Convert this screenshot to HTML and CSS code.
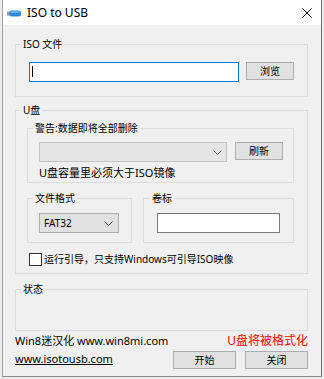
FILE: index.html
```html
<!DOCTYPE html>
<html lang="zh-CN">
<head>
<meta charset="utf-8">
<title>ISO to USB</title>
<link rel="stylesheet" href="styles.css">
</head>
<body>
<div class="window">
  <div class="titlebar">
    <svg class="app-icon" width="14" height="7" viewBox="0 0 14 7">
      <rect x="0" y="1.5" width="2" height="4" fill="#9aa4ad"/>
      <rect x="2" y="0.5" width="12" height="6" rx="2.5" fill="#2d8ad8"/>
      <rect x="3.5" y="1.2" width="9" height="1.8" rx="0.9" fill="#6cb6f0"/>
    </svg>
    <span class="title">ISO to USB</span>
    <svg class="close" width="10" height="10" viewBox="0 0 10 10">
      <path d="M0.5 0.5 L9.5 9.5 M9.5 0.5 L0.5 9.5" stroke="#000" stroke-width="1" fill="none"/>
    </svg>
  </div>
  <div class="client">
    <div class="group g-iso">
      <div class="legend">ISO 文件</div>
      <div class="row iso-row">
        <div class="textbox focused"><span class="caret"></span></div>
        <div class="button btn-browse">浏览</div>
      </div>
    </div>

    <div class="group g-usb">
      <div class="legend">U盘</div>
      <div class="group g-warn">
        <div class="legend">警告:数据即将全部删除</div>
        <div class="row warn-row">
          <div class="combo combo-disabled">
            <svg class="chev" width="9" height="5" viewBox="0 0 9 5"><path d="M0.5 0.5 L4.5 4.5 L8.5 0.5" stroke="#606060" fill="none"/></svg>
          </div>
          <div class="button btn-refresh">刷新</div>
        </div>
        <div class="capacity">U盘容量里必须大于ISO镜像</div>
      </div>
      <div class="row sub-row">
        <div class="group g-fs">
          <div class="legend">文件格式</div>
          <div class="combo fs-combo">
            <span class="combo-text">FAT32</span>
            <svg class="chev" width="9" height="5" viewBox="0 0 9 5"><path d="M0.5 0.5 L4.5 4.5 L8.5 0.5" stroke="#404040" fill="none"/></svg>
          </div>
        </div>
        <div class="group g-label">
          <div class="legend">卷标</div>
          <div class="textbox label-box"></div>
        </div>
      </div>
      <div class="check-row">
        <span class="checkbox"></span>
        <span class="check-text">运行引导，只支持Windows可引导ISO映像</span>
      </div>
    </div>

    <div class="group g-status">
      <div class="legend">状态</div>
    </div>

    <div class="footer-row first">
      <span class="credit">Win8迷汉化 www.win8mi.com</span>
      <span class="warning">U盘将被格式化</span>
    </div>
    <div class="footer-row second">
      <a class="site">www.isotousb.com</a>
      <div class="buttons">
        <div class="button btn-action">开始</div>
        <div class="button btn-action">关闭</div>
      </div>
    </div>
  </div>
</div>
</body>
</html>
```

FILE: styles.css
```css
html, body {
  margin: 0;
  padding: 0;
}
body {
  width: 324px;
  height: 379px;
  overflow: hidden;
  background: #ededed;
  font-family: "Noto Sans", "Noto Sans CJK SC", sans-serif;
  color: #000;
}
.window {
  margin-left: 2px;
  width: 318px;
  height: 376px;
  border: 1px solid;
  border-top: 0;
  border-color: #a0a0a0 #707070 #8a8a8a #a0a0a0;
  background: #f0f0f0;
}
.titlebar {
  height: 25px;
  background: #fff;
  display: flex;
  align-items: center;
  padding: 0 9px 0 4px;
}
.app-icon {
  display: block;
  margin-top: 1px;
}
.title {
  margin-left: 6px;
  font-size: 12px;
  line-height: 16px;
}
.close {
  display: block;
  margin-left: auto;
  margin-top: 1px;
}
.client {
  padding: 19px 13px 0 12px;
}
.group {
  --pl: 0px;
  border: 1px solid #dcdcdc;
  padding-left: var(--pl);
}
.legend {
  width: max-content;
  margin: -7px 0 0 calc(5px - var(--pl));
  padding: 0 2px;
  background: #f0f0f0;
  font-size: 10px;
  line-height: 13px;
}
.row {
  display: flex;
  align-items: flex-start;
}
.textbox {
  box-sizing: border-box;
  height: 20px;
  background: #fff;
  border: 1px solid #7a7a7a;
}
.button {
  box-sizing: border-box;
  height: 18px;
  background: #e1e1e1;
  border: 1px solid #adadad;
  font-size: 10px;
  line-height: 16px;
  text-align: center;
}

/* ISO group */
.g-iso {
  --pl: 13px;
  padding-right: 13px;
  padding-bottom: 14px;
}
.iso-row {
  margin-top: 11px;
  gap: 7px;
}
.textbox.focused {
  width: 210px;
  border-color: #0078d7;
}
.caret {
  display: block;
  width: 1px;
  height: 11px;
  margin: 3px 0 0 2px;
  background: #000;
}
.btn-browse {
  width: 48px;
}

/* USB group */
.g-usb {
  --pl: 11px;
  margin-top: 13px;
  padding-right: 13px;
  padding-bottom: 7px;
}
.g-warn {
  --pl: 11px;
  margin-top: 11px;
  padding-right: 10px;
  padding-bottom: 1px;
}
.warn-row {
  margin-top: 7px;
  gap: 8px;
}
.combo {
  box-sizing: border-box;
  height: 20px;
  display: flex;
  align-items: center;
  border: 1px solid #adadad;
  background: #e1e1e1;
}
.combo-disabled {
  width: 188px;
  background: #e5e5e5;
  border-color: #c4c4c4;
  justify-content: flex-end;
  padding-right: 4px;
}
.chev {
  display: block;
}
.btn-refresh {
  width: 48px;
}
.capacity {
  margin-top: 3px;
  font-size: 11px;
  line-height: 16px;
}
.sub-row {
  margin-top: 15px;
  gap: 11px;
}
.g-fs {
  --pl: 11px;
  width: 105px;
  box-sizing: border-box;
  padding-bottom: 9px;
}
.fs-combo {
  margin-top: 8px;
  width: 80px;
  padding: 0 5px 0 4px;
  justify-content: space-between;
}
.combo-text {
  font-size: 10px;
  line-height: 14px;
}
.g-label {
  --pl: 13px;
  width: 151px;
  box-sizing: border-box;
  padding-bottom: 9px;
}
.g-label .legend {
  margin-left: calc(6px - var(--pl));
}
.label-box {
  margin-top: 8px;
  width: 123px;
}
.check-row {
  margin: 10px 0 0 2px;
  display: flex;
  align-items: center;
  gap: 2px;
  height: 13px;
}
.checkbox {
  box-sizing: border-box;
  width: 13px;
  height: 13px;
  border: 1px solid #333;
  background: #fff;
}
.check-text {
  font-size: 10px;
  line-height: 13px;
}

/* status */
.g-status {
  margin-top: 15px;
  padding-bottom: 34px;
}

/* footer */
.footer-row {
  display: flex;
  justify-content: space-between;
}
.footer-row.first {
  margin-top: 2px;
  align-items: center;
  height: 16px;
}
.credit {
  font-size: 11px;
  line-height: 16px;
}
.warning {
  font-size: 12px;
  line-height: 16px;
  color: #ff0000;
}
.footer-row.second {
  padding-top: 2px;
  align-items: flex-start;
}
.site {
  font-size: 11px;
  line-height: 16px;
  color: #000;
  text-decoration: underline;
}
.buttons {
  display: flex;
  gap: 9px;
}
.btn-action {
  width: 63px;
}
```
